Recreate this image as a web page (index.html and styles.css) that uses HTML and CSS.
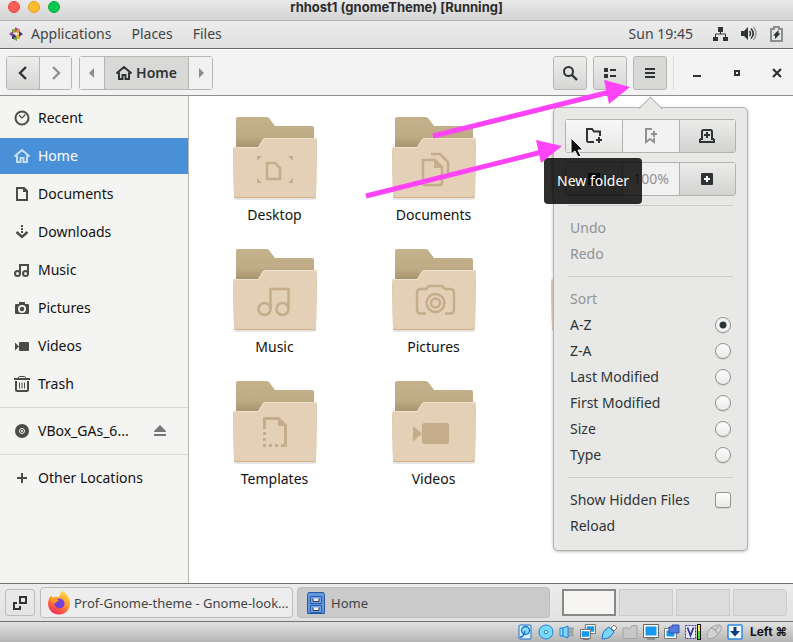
FILE: index.html
```html
<!DOCTYPE html>
<html lang="en">
<head>
<meta charset="utf-8">
<title>rhhost1 (gnomeTheme) [Running]</title>
<link rel="stylesheet" href="styles.css">
</head>
<body>
<svg class="defs" aria-hidden="true">
  <defs>
    <linearGradient id="backFill" x1="0" y1="0" x2="0" y2="1">
      <stop offset="0" stop-color="#c4b28c"/><stop offset=".6" stop-color="#bfac86"/><stop offset="1" stop-color="#a38f6c"/>
    </linearGradient>
    <symbol id="folder" viewBox="0 0 84 84">
      <path d="M1 78h82v3q0 2-2 2H3q-2 0-2-2z" fill="#000" opacity=".1"/>
      <path d="M3 32V2q0-2 2-2h28q2 0 3 1l6 8h37q2 0 2 2v21z" fill="url(#backFill)"/>
      <path d="M0 32q0-2 2-2h23l5-8q1-1 2-1h50q2 0 2 2l-1 56q0 2-2 2H3q-2 0-2-2z" fill="#d0b088"/>
      <path d="M0 32q0-2 2-2h23l5-8q1-1 2-1h50q2 0 2 2l-1 55q0 2-2 2H3q-2 0-2-2z" fill="#e3d0b6"/>
      <path d="M.5 32.500q0-2 2-2h23l5-8q1-1 2-1h49q2 0 2 2" fill="none" stroke="#efe2cf"/>
    </symbol>
    <symbol id="home" viewBox="0 0 16 16">
      <path d="M.5 8.500 8 2l7.500 6.500M3 7.500V14h3.500v-4h3v4H13V7.500" fill="none" stroke="currentColor" stroke-width="2"/>
    </symbol>
  </defs>
</svg>

<header class="titlebar">
  <div class="lights"><button class="light red" aria-label="Close machine"></button><button class="light amber" aria-label="Minimise machine"></button><button class="light green" aria-label="Zoom machine"></button></div>
  <h1>rhhost1 (gnomeTheme) [Running]</h1>
</header>

<nav class="menubar">
  <button class="menu"><svg width="14" height="14" viewBox="0 0 14 14"><path d="M3 2h4v4H3z" fill="#8fae3a"/><path d="M7 2h4v4H7z" fill="#e89a3a"/><path d="M3 7h4v5H3z" fill="#34387e"/><path d="M7 7h4v5H7z" fill="#efb62d"/><path d="M0 7l4-3v6z" fill="#8a4a9a"/><path d="M6 0l4 2-4 3z" fill="#a9559c"/><path d="M14 7l-4-3v6z" fill="#4b3a78"/><path d="M8 14l-4-2 4-3z" fill="#75a63a"/><path d="M7 5v4M5 7h4" stroke="#f4f4f4"/></svg>Applications</button>
  <button class="menu">Places</button>
  <button class="menu">Files</button>
  <button class="clock">Sun 19:45</button>
  <div class="tray">
    <svg width="15" height="16" viewBox="0 0 15 16"><path d="M5 1h5v5H5zM0 11h5v4H0zM10 11h5v4h-5z" fill="#2e3436"/><path d="M7.500 5v3M2.500 11V8h10v3" fill="none" stroke="#2e3436"/></svg>
    <svg width="16" height="16" viewBox="0 0 16 16"><path d="M0 5h3l4-4v13l-4-4H0z" fill="#2e3436"/><path d="M8.500 5q2 2.500 0 5M10 2.500q4.500 5 0 10" fill="none" stroke="#2e3436" stroke-width="1.500"/><path d="M12.500 1q5 6.500 0 13" fill="none" stroke="#9a9c9c" stroke-width="1.500"/></svg>
    <svg width="13" height="16" viewBox="0 0 13 16"><path d="M1 3h3V1h5v2h3v12H1z" fill="none" stroke="#8b8e8f" stroke-width="2"/><path d="M8.500 4v3.500h2L5 13V9.500H3z" fill="#2e3436"/></svg>
  </div>
</nav>

<div class="toolbar">
  <div class="linked">
    <button class="btn raised" aria-label="Back"><svg width="16" height="16" viewBox="0 0 16 16"><path d="M11 2 5 8l6 6" fill="none" stroke="#2e3436" stroke-width="2.400"/></svg></button>
    <button class="btn flat" aria-label="Forward"><svg width="16" height="16" viewBox="0 0 16 16"><path d="m5 2 6 6-6 6" fill="none" stroke="#8f9294" stroke-width="2.400"/></svg></button>
  </div>
  <div class="linked">
    <button class="btn flat narrow" aria-label="Scroll path left"><svg width="6" height="10" viewBox="0 0 6 10"><path d="M5 0v10L0 5z" fill="#8b8e8f"/></svg></button>
    <button class="btn pressed path"><svg width="16" height="16"><use href="#home"/></svg>Home</button>
    <button class="btn flat narrow" aria-label="Scroll path right"><svg width="6" height="10" viewBox="0 0 6 10"><path d="M1 0v10l5-5z" fill="#8b8e8f"/></svg></button>
  </div>
  <div class="tools">
    <button class="btn raised solo" aria-label="Search"><svg width="16" height="16" viewBox="0 0 16 16"><circle cx="6.500" cy="6.500" r="4.500" fill="none" stroke="#2e3436" stroke-width="2"/><path d="m10 10 5 5" stroke="#2e3436" stroke-width="2.400"/></svg></button>
    <button class="btn raised solo" aria-label="List view"><svg width="16" height="16" viewBox="0 0 16 16"><path d="M2 3h4v4H2zM2 9h4v4H2zM8 4h6v2H8zM8 10h6v2H8z" fill="#2e3436"/></svg></button>
    <div class="anchor">
      <button class="btn pressed solo" aria-label="Menu" aria-expanded="true"><svg width="16" height="16" viewBox="0 0 16 16"><path d="M3 3h10v2H3zM3 7h10v2H3zM3 11h10v2H3z" fill="#2e3436"/></svg></button>
      <div class="popover">
        <div class="triple">
          <button class="cell new" aria-describedby="tip"><svg width="18" height="16" viewBox="0 0 18 16"><path d="M9 14H3.500Q2 14 2 12.500V1h5l2 2.500h6V8" fill="none" stroke="#2e3436" stroke-width="2"/><path d="M14 9v6M11 12h6" stroke="#2e3436" stroke-width="2"/></svg></button>
          <button class="cell off" aria-label="Bookmark" disabled><svg width="14" height="16" viewBox="0 0 14 16"><path d="M8 1H2v13l4-3 4 3v-4" fill="none" stroke="#8f9294" stroke-width="2"/><path d="M10 3v6M7 6h6" stroke="#8f9294" stroke-width="2"/></svg></button>
          <button class="cell" aria-label="New tab"><svg width="16" height="16" viewBox="0 0 16 16"><path d="M3 12V3.500Q3 2 4.500 2h7Q13 2 13 3.500V12M1 11v3h14v-3M1 11h3M12 11h3" fill="none" stroke="#2e3436" stroke-width="2"/><path d="M8 4v6M5 7h6" stroke="#2e3436" stroke-width="2"/></svg></button>
          <div class="tooltip" role="tooltip" id="tip">New folder</div>
        </div>
        <div class="triple">
          <button class="cell" aria-label="Zoom out"><svg width="12" height="12" viewBox="0 0 12 12"><path d="M0 0h12v12H0z" fill="#2e3436"/></svg></button>
          <button class="cell off" disabled>100%</button>
          <button class="cell" aria-label="Zoom in"><svg width="12" height="12" viewBox="0 0 12 12"><rect width="12" height="12" rx="1" fill="#2e3436"/><path d="M3 6h6M6 3v6" stroke="#fff" stroke-width="2"/></svg></button>
        </div>
        <hr>
        <button class="row" disabled>Undo</button>
        <button class="row" disabled>Redo</button>
        <hr>
        <div class="row dim">Sort</div>
        <label class="row">A-Z<input type="radio" name="sort" checked></label>
        <label class="row">Z-A<input type="radio" name="sort"></label>
        <label class="row">Last Modified<input type="radio" name="sort"></label>
        <label class="row">First Modified<input type="radio" name="sort"></label>
        <label class="row">Size<input type="radio" name="sort"></label>
        <label class="row">Type<input type="radio" name="sort"></label>
        <hr>
        <label class="row">Show Hidden Files<input type="checkbox"></label>
        <button class="row">Reload</button>
      </div>
    </div>
    <div class="divider"></div>
    <div class="controls">
      <button aria-label="Minimise"><svg width="10" height="10" viewBox="0 0 10 10"><path d="M1 7h8v2H1z" fill="#2e3436"/></svg></button>
      <button aria-label="Maximise"><svg width="10" height="10" viewBox="0 0 10 10"><path d="M3 3h4v4H3z" fill="none" stroke="#2e3436" stroke-width="2"/></svg></button>
      <button aria-label="Close"><svg width="10" height="10" viewBox="0 0 10 10"><path d="m1 1 8 8M9 1 1 9" stroke="#2e3436" stroke-width="2.200"/></svg></button>
    </div>
  </div>
</div>

<div class="body">
  <nav class="sidebar">
    <a href="#"><svg width="16" height="16" viewBox="0 0 16 16"><circle cx="8" cy="8" r="6.500" fill="none" stroke="currentColor" stroke-width="2"/><path d="m5 5 3 3 3.500-3.500" fill="none" stroke="currentColor" stroke-width="1.200"/></svg>Recent</a>
    <a href="#" class="active"><svg width="16" height="16"><use href="#home"/></svg>Home</a>
    <a href="#"><svg width="16" height="16" viewBox="0 0 16 16"><path d="M3 2h7l3 3v9H3z" fill="none" stroke="currentColor" stroke-width="2"/><path d="M9 1v5h5z" fill="currentColor"/></svg>Documents</a>
    <a href="#"><svg width="16" height="16" viewBox="0 0 16 16"><path d="m2.500 8 5.500 5 5.500-5" fill="none" stroke="currentColor" stroke-width="2.400"/><path d="M7 1h2v2H7zM7 4h2v2H7zM7 7h2v2H7z" fill="currentColor"/></svg>Downloads</a>
    <a href="#"><svg width="16" height="16" viewBox="0 0 16 16"><circle cx="3.500" cy="11.500" r="2.500" fill="none" stroke="currentColor" stroke-width="2"/><circle cx="11.500" cy="11.500" r="2.500" fill="none" stroke="currentColor" stroke-width="2"/><path d="M6 11.500V3h8v8.500" fill="none" stroke="currentColor" stroke-width="2"/></svg>Music</a>
    <a href="#"><svg width="16" height="16" viewBox="0 0 16 16"><path fill-rule="evenodd" d="M1 5q0-1 1-1h3V2h6v2h3q1 0 1 1v8q0 1-1 1H2q-1 0-1-1zM8 5a4 4 0 1 0 0 8 4 4 0 0 0 0-8z" fill="currentColor"/><circle cx="8" cy="9" r="2.200" fill="currentColor"/></svg>Pictures</a>
    <a href="#"><svg width="16" height="16" viewBox="0 0 16 16"><path d="M1 4.500l4 4-4 4z" fill="currentColor"/><rect x="5" y="4" width="10" height="9" rx="1" fill="currentColor"/></svg>Videos</a>
    <a href="#"><svg width="16" height="16" viewBox="0 0 16 16"><path d="M2 5v8.500Q2 15 3.500 15h9q1.500 0 1.500-1.500V5M0 3h16" fill="none" stroke="currentColor" stroke-width="2"/><path d="M4.500 2q0-1.500 1-1.500h5q1 0 1 1.500M5.500 6.500v6M8 6.500v6M10.500 6.500v6" fill="none" stroke="currentColor"/></svg>Trash</a>
    <hr>
    <a href="#"><svg width="16" height="16" viewBox="0 0 16 16"><circle cx="8" cy="8" r="7" fill="currentColor"/><circle cx="8" cy="8" r="2.500" fill="none" stroke="#f4f4f2"/><circle cx="8" cy="8" r="1" fill="#f4f4f2"/></svg>VBox_GAs_6...<svg class="eject" width="12" height="12" viewBox="0 0 12 12"><path d="M6 0l6 6v1H0V6zM0 9h12v2H0z" fill="#727879"/></svg></a>
    <hr>
    <a href="#"><svg width="16" height="16" viewBox="0 0 16 16"><path d="M8 3v10M3 8h10" stroke="currentColor" stroke-width="2"/></svg>Other Locations</a>
  </nav>

  <main class="files">
    <a href="#"><svg width="84" height="84" viewBox="0 0 84 84"><use href="#folder"/><g fill="#c5ad8c"><path d="M24 39h5l-5 5zM60 39h-5l5 5zM24 66h5l-5-5zM60 66h-5l5-5z"/><path d="M34 46h8l5 5v11H34z" fill="none" stroke="#c5ad8c" stroke-width="2.500"/></g></svg>Desktop</a>
    <a href="#"><svg width="84" height="84" viewBox="0 0 84 84"><use href="#folder"/><g fill="none" stroke="#c5ad8c" stroke-width="2.500"><path d="M31 43h12l7 7v16q0 2-2 2H33q-2 0-2-2z"/><path d="M39 37h9l8 8v16"/><path d="M42 43v8h8z" fill="#c5ad8c" stroke="none"/></g></svg>Documents</a>
    <a href="#" aria-label="Downloads folder"><svg width="84" height="84" viewBox="0 0 84 84"><use href="#folder"/></svg></a>
    <a href="#"><svg width="84" height="84" viewBox="0 0 84 84"><use href="#folder"/><g fill="none" stroke="#c5ad8c" stroke-width="2.500"><circle cx="31.500" cy="60" r="6"/><circle cx="49.500" cy="60" r="6"/><path d="M37.500 60V40h18v20"/></g></svg>Music</a>
    <a href="#"><svg width="84" height="84" viewBox="0 0 84 84"><use href="#folder"/><g fill="none" stroke="#c5ad8c" stroke-width="2.500"><path d="M34 64.500h-5q-4 0-4-4V44q0-4 4-4h5l3-3h13l3 3h5q4 0 4 4v16.500q0 4-4 4h-5"/><circle cx="43.500" cy="54" r="9"/><circle cx="43.500" cy="54" r="4.500"/></g></svg>Pictures</a>
    <a href="#" aria-label="Public folder"><svg width="84" height="84" viewBox="0 0 84 84"><use href="#folder"/></svg></a>
    <a href="#"><svg width="84" height="84" viewBox="0 0 84 84"><use href="#folder"/><g fill="#c5ad8c"><path d="M30 36h16l8 8v22h-6v-3h3V45h-6v-6H33v9h-3z"/><path d="M30 51h3v3h-3zM30 57h3v3h-3zM30 63h3v3h-3zM36 63h3v3h-3zM42 63h3v3h-3z"/></g></svg>Templates</a>
    <a href="#"><svg width="84" height="84" viewBox="0 0 84 84"><use href="#folder"/><g fill="#c5ad8c"><path d="M21 45l9 7.500-9 8z"/><rect x="30" y="42" width="27" height="21" rx="2.500"/></g></svg>Videos</a>
  </main>
</div>

<footer class="taskbar">
  <button class="show" aria-label="Show desktop"><svg width="16" height="16" viewBox="0 0 16 16"><path d="M8 2h6v6H8z" fill="none" stroke="#2e3436" stroke-width="2"/><path d="M5 8H2v6h6v-3" fill="none" stroke="#2e3436" stroke-width="2"/></svg></button>
  <button class="task"><svg width="24" height="24" viewBox="0 0 24 24"><defs><linearGradient id="fox" x1=".8" y1="0" x2=".3" y2="1"><stop offset="0" stop-color="#ffe14a"/><stop offset=".45" stop-color="#ff9a2a"/><stop offset="1" stop-color="#f5245c"/></linearGradient></defs><path d="M16 0c2 2 7 6 7 12 0 7-5 11.500-11 11.500S1 19 1 12.500C1 9 2.500 7 4 4.500L6 7c2-2 4-1 6-1 1-3 2-5 4-6z" fill="url(#fox)"/><circle cx="12.500" cy="12.500" r="5" fill="#7340d8"/><path d="M4 8c3-2 6-1 8 2-2 0-3 1-3 2-2 0-4-1-5-4z" fill="#ff9a24"/></svg><span>Prof-Gnome-theme - Gnome-look...</span></button>
  <button class="task current"><svg width="24" height="24" viewBox="0 0 24 24"><path d="M4.500 1.500h15l1 2v19h-17v-19z" fill="#6397de" stroke="#2459a6"/><path d="M6.500 5.500h11v7h-11zM6.500 14.500h11v7h-11z" fill="#78a8ea" stroke="#2459a6"/><path d="M9 7.500v3h6v-3M9 16.500v3h6v-3" fill="#eee" stroke="#343a44"/></svg><span>Home</span></button>
  <div class="pager">
    <button class="here" aria-label="Workspace 1"></button><button aria-label="Workspace 2"></button><button aria-label="Workspace 3"></button><button aria-label="Workspace 4"></button>
  </div>
</footer>

<footer class="status">
  <svg width="16" height="16" viewBox="0 0 16 16"><rect x="2" y="1" width="12" height="14" rx="1" fill="#d8f0ff" stroke="#1a72cc"/><circle cx="8.500" cy="6.500" r="4" fill="#8adcff" stroke="#1a72cc" stroke-width="1.300"/><path d="M3 13q3 1 5-6" fill="none" stroke="#1a72cc" stroke-width="1.500"/></svg>
  <svg width="16" height="16" viewBox="0 0 16 16"><circle cx="8" cy="8" r="7" fill="#79dcff" stroke="#1c80d8"/><circle cx="8" cy="8" r="1.800" fill="#fff" stroke="#1c80d8"/></svg>
  <svg width="16" height="16" viewBox="0 0 16 16"><path d="M8 3h7v10H8z" fill="#b5b5b5"/><path d="M9 5h5M9 8h5M9 11h5" stroke="#888"/><path d="M1 4h3v8H1z" fill="#9ee5ff" stroke="#1c80d8"/><path d="M4 4l5-2v12l-5-2z" fill="#7ad8ff" stroke="#1c80d8"/></svg>
  <svg width="16" height="16" viewBox="0 0 16 16"><path d="M6 1.500h9v7H6z" fill="#1598ee" stroke="#f8f8f8" stroke-width="1.500"/><path d="M5.300.5h10.200v9H5.300z" fill="none" stroke="#777"/><path d="M1 6.500h9v7H1z" fill="#1598ee" stroke="#f8f8f8" stroke-width="1.500"/><path d="M.5 5.500h10v9H.5zM3 15.500h6" fill="none" stroke="#777"/></svg>
  <svg width="16" height="16" viewBox="0 0 16 16"><path d="M10 4l3-3 3 3-3 3z" fill="#fff" stroke="#777"/><path d="M8 3l5 5-4 5q-3 2-8 2 0-6 3-9z" fill="#79d4ff" stroke="#1874ce"/></svg>
  <svg width="16" height="16" viewBox="0 0 16 16"><path d="M1 14.500V4h8l1-2.500h5v13z" fill="#c8c8c8" stroke="#a4a4a4"/></svg>
  <svg width="16" height="16" viewBox="0 0 16 16"><path d="M1.500 1.500h13v11h-13z" fill="#1598ee" stroke="#fff" stroke-width="2"/><path d="M.5.5h15v13H.5zM4 15h8" fill="none" stroke="#666"/></svg>
  <svg width="16" height="16" viewBox="0 0 16 16"><path d="M1.500 5.500h10v8h-10z" fill="#1598ee" stroke="#fff" stroke-width="2"/><path d="M.5 4.500h12v10H.5z" fill="none" stroke="#777"/><path d="M5 3h3V1h7v8H5z" fill="#5578dc" stroke="#3250a8"/></svg>
  <svg width="16" height="16" viewBox="0 0 16 16"><path d="M.5 1.500h10v13H.5z" fill="#e9eaff" stroke="#35369c" stroke-dasharray="2 1"/><path d="M2.500 3.500l3 8 3-8" fill="none" stroke="#35369c" stroke-width="1.800"/><path d="M12 0h4v16h-4z" fill="#111"/><path d="M13 1h2v7h-2z" fill="#ffe84a"/><path d="M13 7h2v8h-2z" fill="#42e02a"/></svg>
  <svg width="16" height="16" viewBox="0 0 16 16"><path d="M1 12Q0 8 5 4t9-3q3 3-1 8-5 6-9 6-2 0-3-3z" fill="#d2d2d2" stroke="#a2a2a2"/><path d="M5 4q5 1 7 6M13 2L9 6" fill="none" stroke="#999"/></svg>
  <svg width="16" height="16" viewBox="0 0 16 16"><rect x="1" y="1" width="14" height="14" rx="1" fill="#f8fcff" stroke="#2887e8" stroke-width="1.500"/><path d="M6.500 3h3v4H13l-5 5.500L3 7h3.500z" fill="#0b3c80"/></svg>
  <span>Left ⌘</span>
</footer>

<svg class="notes" width="793" height="220" viewBox="0 0 793 220" aria-hidden="true">
  <g fill="#ff44f8" stroke="#ff44f8">
    <path d="M433 136 610 92M366 196l176-44" stroke-width="5"/>
    <path d="M604 80l26 7-21 17zM536 140l26 6-21 17z" stroke="none"/>
  </g>
  <path d="M571 138v16l4-3 3 6 3-1-3-6h5z" fill="#111" stroke="#fff"/>
</svg>
</body>
</html>
```
FILE: styles.css
```css
* { box-sizing: border-box; }

body {
  margin: 0;
  min-height: 100vh;
  display: flex;
  flex-direction: column;
  position: relative;
  overflow: hidden;
  background: #fff;
  color: #2e3436;
  font: 14px/20px "Noto Sans", "Open Sans", sans-serif;
}

button {
  margin: 0;
  padding: 0;
  border: 0;
  background: none;
  color: inherit;
  font: inherit;
}

a { color: inherit; text-decoration: none; }
svg { display: block; flex: none; }
.defs { position: absolute; width: 0; height: 0; }

.titlebar {
  display: grid;
  grid-template-columns: 1fr auto 1fr;
  align-items: start;
  height: 21px;
  padding: 0 8px;
  border-bottom: 1px solid #b0b0b0;
  background: linear-gradient(#e9e9e9, #d3d3d3);
}
.titlebar h1 {
  margin: 0;
  color: #2c2c2c;
  font: bold 13px/14px Inter, sans-serif;
}
.lights { display: flex; gap: 8px; padding-top: 1px; }
.light { width: 12px; height: 12px; border-radius: 50%; }
.red { background: #ff5f57; border: 1px solid #e2463f; }
.amber { background: #febc2e; border: 1px solid #e0a028; }
.green { background: #00ca4e; border: 1px solid #10a83c; }

.menubar {
  display: flex;
  align-items: center;
  gap: 20px;
  height: 28px;
  padding: 0 10px 2px 9px;
  border-bottom: 1px solid #686966;
  background: linear-gradient(#ececec, #e0e0e0);
  color: #3f4547;
}
.menu { display: flex; align-items: center; gap: 8px; }
.clock { margin-left: auto; }
.tray { display: flex; gap: 13px; }

.toolbar {
  display: flex;
  align-items: center;
  gap: 7px;
  height: 47px;
  padding-left: 6px;
  border-top: 1px solid #fff;
  border-bottom: 1px solid #8f908c;
  background: #f3f3f3;
}
.linked { display: flex; border: 1px solid #b6b6b3; border-radius: 3px; }
.linked .btn + .btn { border-left: 1px solid #b6b6b3; }
.btn {
  display: flex;
  align-items: center;
  justify-content: center;
  gap: 4px;
  width: 32px;
  height: 32px;
}
.btn.narrow { width: 24px; }
.btn.path { width: 84px; font-weight: 600; }
.btn.solo { width: 34px; height: 34px; border: 1px solid #b6b6b3; border-radius: 3px; }
.raised { background: linear-gradient(#ededec, #d6d6d4); }
.pressed { background: #d8d8d6; }
.flat { background: #f1f1f1; }
.tools { display: flex; align-items: center; gap: 6px; margin-left: auto; }
.divider { width: 1px; height: 34px; background: #dcdcda; }
.controls { display: flex; gap: 7px; }
.controls button { display: grid; place-items: center; width: 33px; height: 34px; }
.anchor { position: relative; }

.popover {
  position: absolute;
  z-index: 2;
  top: 51px;
  left: -80px;
  width: 195px;
  padding: 11px;
  border: 1px solid #b2b2ae;
  border-radius: 5px;
  background: #e8e8e6;
  box-shadow: 0 1px 3px rgba(0, 0, 0, .25);
}
.popover::before {
  content: "";
  position: absolute;
  top: -8px;
  left: 88px;
  width: 16px;
  height: 16px;
  border: solid #b2b2ae;
  border-width: 1px 0 0 1px;
  background: linear-gradient(135deg, #e8e8e6 50%, transparent 50%);
  transform: rotate(45deg);
}
.triple {
  position: relative;
  display: grid;
  grid-template-columns: repeat(3, 1fr);
  height: 34px;
  margin-bottom: 9px;
  border: 1px solid #b2b2ae;
  border-radius: 3px;
}
.cell {
  display: grid;
  place-items: center;
  background: linear-gradient(#ececeb, #d2d2d0);
}
.cell + .cell { border-left: 1px solid #b2b2ae; }
.cell.new { background: linear-gradient(#f8f8f8, #e6e6e5); }
.cell.off { background: #f1f1f1; color: #8f9294; }
.tooltip {
  position: absolute;
  z-index: 1;
  top: 38px;
  left: -22px;
  padding: 13px;
  border-radius: 4px;
  background: rgba(0, 0, 0, .82);
  color: #fff;
  white-space: nowrap;
}
.popover hr { height: 1px; margin: 9px 3px; border: 0; background: #cbcbc8; }
.row {
  display: flex;
  align-items: center;
  justify-content: space-between;
  width: 100%;
  height: 26px;
  padding: 0 5px;
}
.row:disabled, .row.dim { color: #909496; }
.row input {
  appearance: none;
  width: 16px;
  height: 16px;
  margin: 0;
  border: 1px solid #92938f;
  border-radius: 3px;
  background: linear-gradient(#fdfdfd, #e9e9e8);
  box-shadow: 0 1px 1px rgba(0, 0, 0, .1);
}
.row input[type="radio"] { border-radius: 50%; }
.row input:checked { background: radial-gradient(circle, #2e3436 3px, #f4f4f4 4px); }

.body { display: flex; flex: 1; }
.sidebar {
  flex: none;
  width: 189px;
  padding-top: 4px;
  border-right: 1px solid #b6b6b3;
  background: #f4f4f2;
  color: #111;
}
.sidebar a {
  display: flex;
  align-items: center;
  gap: 8px;
  height: 36px;
  margin-bottom: 2px;
  padding: 0 22px 0 14px;
}
.sidebar svg { color: #4b4b49; }
.sidebar .active { background: #4a90d9; color: #fff; }
.sidebar .active svg { color: #c5ddf4; }
.sidebar .eject { margin-left: auto; }
.sidebar hr { height: 1px; margin: 5px 0; border: 0; background: #d9d9d7; }

.files {
  flex: 1;
  display: grid;
  grid-template-columns: repeat(auto-fill, 159px);
  align-content: start;
  gap: 24px 0;
  padding: 21px 0 0 6px;
  color: #111;
}
.files a { display: flex; flex-direction: column; align-items: center; gap: 4px; }

.taskbar {
  display: flex;
  align-items: center;
  gap: 4px;
  height: 38px;
  padding: 0 6px 0 5px;
  border-top: 1px solid #72736f;
  background: linear-gradient(#ececec, #e2e2e2);
  color: #3f4547;
  font-size: 13px;
}
.show {
  display: grid;
  place-items: center;
  width: 30px;
  height: 27px;
  margin-right: 1px;
  border: 1px solid #bdbdbb;
  border-radius: 3px;
}
.task {
  display: flex;
  align-items: center;
  flex: 1;
  gap: 3px;
  min-width: 0;
  height: 31px;
  padding-left: 6px;
  border: 1px solid #bdbdbb;
  border-radius: 4px;
  background: #ededed;
}
.task span { white-space: nowrap; }
.task.current { background: #cacaca; }
.pager { display: flex; gap: 3px; margin-left: 8px; }
.pager button {
  width: 54px;
  height: 27px;
  border: 1px solid #cbcbcb;
  background: #dcdcdc;
}
.pager .here { border: 2px solid #888886; background: #f6f5f3; }
.pager button:last-child { border-radius: 0 4px 4px 0; }

.status {
  display: flex;
  align-items: center;
  justify-content: flex-end;
  gap: 5px;
  height: 21px;
  padding-right: 6px;
  border-top: 1px solid #72736f;
  background: linear-gradient(#e2e2e2, #b4b4b4);
  color: #111;
  font: 700 12px/18px Inter, "DejaVu Sans", sans-serif;
}
.status span { margin-left: 2px; }

.notes { position: absolute; z-index: 3; top: 0; left: 0; pointer-events: none; }
```
